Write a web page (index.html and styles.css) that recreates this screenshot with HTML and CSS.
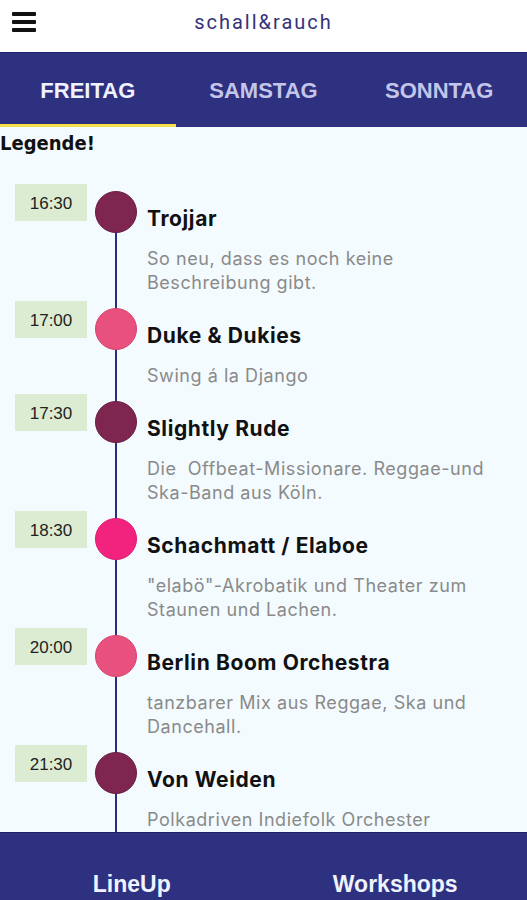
FILE: index.html
```html
<!DOCTYPE html>
<html>
  <head>
    <title>schall&amp;rauch LineUp</title>
    <link rel="stylesheet" href="styles.css">
  </head>
  <body>
    <div class="app">
      <header class="topbar">
        <button class="menu" type="button" aria-label="Menü">
          <span></span><span></span><span></span>
        </button>
        <div class="brand">schall&amp;rauch</div>
      </header>

      <nav class="days">
        <a class="day active" href="#">FREITAG</a>
        <a class="day" href="#">SAMSTAG</a>
        <a class="day" href="#">SONNTAG</a>
      </nav>

      <main class="content">
        <h2 class="legend">Legende!</h2>

        <ul class="timeline">
          <li class="slot first">
            <div class="time">16:30</div>
            <div class="marker"><span class="dot maroon"></span></div>
            <div class="act">
              <h3>Trojjar</h3>
              <p>So neu, dass es noch keine Beschreibung gibt.</p>
            </div>
          </li>
          <li class="slot">
            <div class="time">17:00</div>
            <div class="marker"><span class="dot rose"></span></div>
            <div class="act">
              <h3>Duke &amp; Dukies</h3>
              <p>Swing á la Django</p>
            </div>
          </li>
          <li class="slot">
            <div class="time">17:30</div>
            <div class="marker"><span class="dot maroon"></span></div>
            <div class="act">
              <h3>Slightly Rude</h3>
              <p>Die&nbsp; Offbeat-Missionare. Reggae-und Ska-Band aus Köln.</p>
            </div>
          </li>
          <li class="slot">
            <div class="time">18:30</div>
            <div class="marker"><span class="dot hot"></span></div>
            <div class="act">
              <h3>Schachmatt / Elaboe</h3>
              <p>"elabö"-Akrobatik und Theater zum Staunen und Lachen.</p>
            </div>
          </li>
          <li class="slot">
            <div class="time">20:00</div>
            <div class="marker"><span class="dot rose"></span></div>
            <div class="act">
              <h3>Berlin Boom Orchestra</h3>
              <p>tanzbarer Mix aus Reggae, Ska und Dancehall.</p>
            </div>
          </li>
          <li class="slot">
            <div class="time">21:30</div>
            <div class="marker"><span class="dot maroon"></span></div>
            <div class="act">
              <h3>Von Weiden</h3>
              <p>Polkadriven Indiefolk Orchester</p>
            </div>
          </li>
        </ul>
      </main>

      <footer class="tabbar">
        <a href="#">LineUp</a>
        <a href="#">Workshops</a>
      </footer>
    </div>
  </body>
</html>
```

FILE: styles.css
```css
body {
  margin: 0;
  font-family: Inter, "Noto Sans", sans-serif;
  background-color: #f3fbfe;
  color: #111;
}

.app {
  height: 900px;
  display: flex;
  flex-direction: column;
  overflow: hidden;
}

.topbar {
  height: 52px;
  flex: none;
  background-color: #fff;
  display: flex;
  align-items: center;
  position: relative;
}

.menu {
  width: 24px;
  height: 20px;
  margin-left: 12px;
  margin-bottom: 8px;
  padding: 0;
  border: none;
  background: none;
  display: flex;
  flex-direction: column;
  justify-content: space-between;
}

.menu span {
  display: block;
  height: 4px;
  background-color: #111;
  border-radius: 1px;
}

.brand {
  position: absolute;
  left: 0;
  right: 0;
  top: 10px;
  text-align: center;
  font-family: Roboto, sans-serif;
  font-size: 20px;
  letter-spacing: 2px;
  color: #34327a;
}

.days {
  height: 75px;
  flex: none;
  box-sizing: border-box;
  background-color: #2e3180;
  border-top: 1px solid #1f2168;
  display: grid;
  grid-template-columns: 1fr 1fr 1fr;
}

.day {
  display: flex;
  align-items: center;
  justify-content: center;
  padding-top: 4px;
  font-family: "Liberation Sans", Arial, sans-serif;
  font-weight: bold;
  font-size: 22px;
  color: #c3c6ea;
  text-decoration: none;
  border-bottom: 3px solid transparent;
}

.day.active {
  color: #eef3ff;
  border-bottom-color: #f6e04a;
}

.content {
  flex: 1;
  overflow: hidden;
}

.legend {
  margin: 2px 0 0;
  font-family: "DejaVu Sans", sans-serif;
  font-stretch: condensed;
  font-size: 20px;
  line-height: 28px;
  font-weight: bold;
  color: #111;
}

.timeline {
  list-style: none;
  margin: 27px 0 0;
  padding: 0;
}

.slot {
  display: grid;
  grid-template-columns: 72px 42px 1fr;
  column-gap: 8px;
  padding-left: 15px;
}

.time {
  height: 37px;
  background-color: #dcecd3;
  font-family: "Liberation Sans", Arial, sans-serif;
  font-size: 17px;
  line-height: 39px;
  text-align: center;
  color: #222;
}

.marker {
  padding-top: 7px;
  background: linear-gradient(#2b2f80, #2b2f80) center / 2px 100% no-repeat;
}

.first .marker {
  background-position: center 28px;
}

.dot {
  display: block;
  width: 42px;
  height: 42px;
  border-radius: 50%;
  box-sizing: border-box;
}

.maroon {
  background-color: #7e2550;
  border: 1px solid #6a1d42;
}

.rose {
  background-color: #e8507d;
  border: 1px solid #d84370;
}

.hot {
  background-color: #f2237f;
  border: 1px solid #dc1a6f;
}

.act {
  margin-left: 2px;
  padding: 23px 30px 6px 0;
}

.act h3 {
  margin: 0;
  font-size: 21px;
  line-height: 24px;
  letter-spacing: 0.6px;
  font-weight: bold;
  color: #111;
}

.act p {
  margin: 16px 0 0;
  font-size: 18px;
  line-height: 24px;
  letter-spacing: 0.55px;
  color: #8a8a8a;
}

.tabbar {
  height: 68px;
  flex: none;
  box-sizing: border-box;
  background-color: #2e3180;
  border-top: 1px solid #1f2168;
  display: grid;
  grid-template-columns: 1fr 1fr;
  padding-top: 39px;
}

.tabbar a {
  text-align: center;
  font-family: "Liberation Sans", Arial, sans-serif;
  font-weight: bold;
  font-size: 23px;
  line-height: 24px;
  color: #eef3ff;
  text-decoration: none;
}
```
